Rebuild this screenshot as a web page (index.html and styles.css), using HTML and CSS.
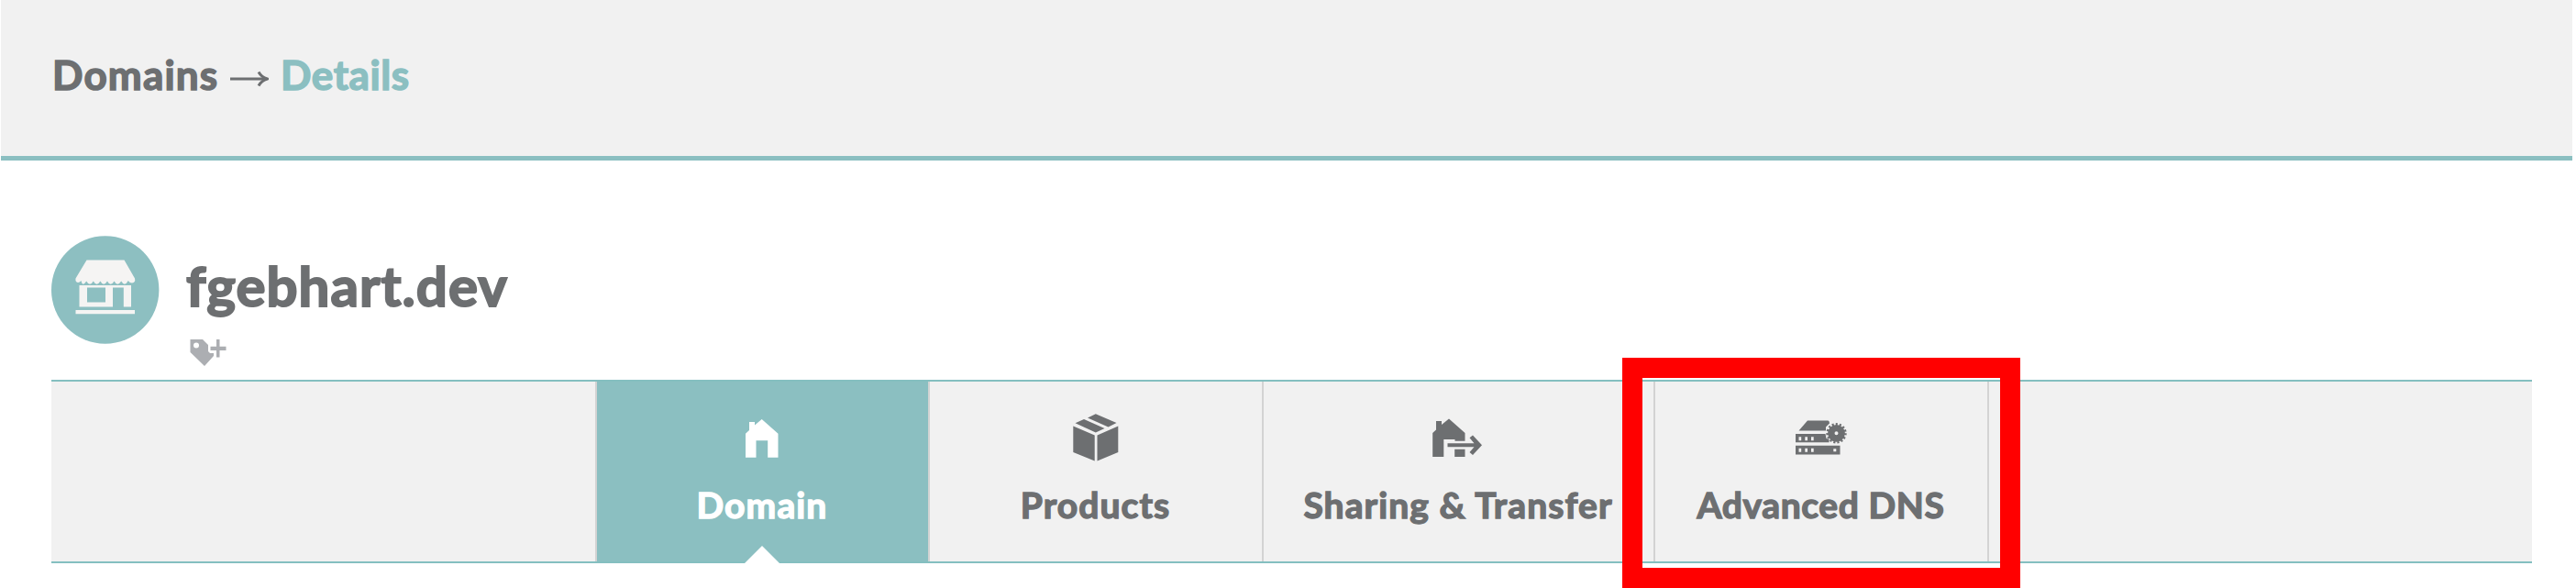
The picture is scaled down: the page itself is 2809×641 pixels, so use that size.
FILE: index.html
```html
<!DOCTYPE html>
<html lang="en">
<head>
<meta charset="utf-8">
<title>Domain details</title>
<link rel="stylesheet" href="styles.css">
</head>
<body>
<header class="crumbs">
  <span class="crumb crumb-root">Domains</span>
  <svg class="crumb-arrow" viewBox="0 0 42 18"><path d="M0 9H39" stroke-width="3"/><path d="M31 1.5Q34 7 40.500 9Q34 11 31 16.500" stroke-width="3"/></svg>
  <span class="crumb crumb-current">Details</span>
</header>
<main class="page">
  <section class="domain">
    <svg class="badge" viewBox="56 257 118 118">
      <circle cx="114.700" cy="316" r="58.700" fill="#8dbfc1"/>
      <g fill="#f5f4f3">
        <path d="M94.500 283.500H135.500L147 303.500Q148 308 144 308.500Q141.500 308.500 139.800 306Q136 313 132.200 306.500Q128 313 124.600 306.500Q120.500 313 117 306.500Q113 313 109.400 306.500Q105.500 313 101.800 306.500Q98 313 94.200 306.500Q90 313 88.500 306Q85.500 309.500 83 307Q82 305.500 82.500 303.500Z"/>
        <path fill-rule="evenodd" d="M86.500 311H143V334.500H134.800V313.500H123V334.500H86.500ZM95 313.500V329.500H115V313.500Z"/>
        <path d="M82.500 338H147V342.200H82.500Z"/>
      </g>
    </svg>
    <div class="domain-info">
      <h1 class="domain-name">fgebhart.dev</h1>
      <svg class="tag-add" viewBox="207 369 42 32" fill="#acaeb2">
        <path fill-rule="evenodd" d="M207.500 370H221L227 376V383L229 385H233V388L223 399L207.500 384ZM214 373.500A3 3 0 1 0 214 379.500A3 3 0 1 0 214 373.500Z"/>
        <path d="M229.500 377.700H236V370H239.500V377.700H246.500V382H239.500V389.500H236V382H229.500Z"/>
      </svg>
    </div>
  </section>
  <nav class="tabs">
    <a class="tab tab-active">
      <svg class="tab-icon" viewBox="801.500 446 60 60"><path d="M813.500 498.700V472.700L817.500 469V460H823.500V463.500L831.200 457L849 472.700V498.700H837.700V480.300H825V498.700Z"/></svg>
      <span class="tab-label">Domain</span>
    </a>
    <a class="tab">
      <svg class="tab-icon" viewBox="1165 446 60 60"><path d="M1170.300 464.500L1193.700 474.500V502.500L1170.300 493ZM1219.300 464.500V493L1196.500 502.500V474.500ZM1194.800 451.300L1217.500 461L1208.500 465.500L1186 455.500ZM1182 457L1204.500 467L1194.800 471.500L1172.500 461.300Z"/></svg>
      <span class="tab-label">Products</span>
    </a>
    <a class="tab tab-wide">
      <svg class="tab-icon" viewBox="1560.500 446 60 60"><path d="M1562.700 498V472L1566.500 468.500V459H1572.500V463L1580.500 456.500L1598 472V480.800H1587V479H1574.800V498ZM1586.700 489.700H1598V498H1586.700Z"/><path d="M1579 483.200H1608L1603 477.200L1606.500 474.500L1616.500 485.200L1606.500 496L1603 493L1608 487.200H1579Z"/></svg>
      <span class="tab-label">Sharing &amp; Transfer</span>
    </a>
    <a class="tab">
      <svg class="tab-icon" viewBox="1956 446 60 60">
        <path d="M1971 458.500H1993.500Q1995 459 1995 461.500L1991 465.500V469.500H1961.500Z"/>
        <path fill-rule="evenodd" d="M1958 473H1990.500L1991.500 478L1994.500 479V482.300H1958ZM1961.500 476.300V480.300H1964.200V476.300ZM1968.300 476.300V480.300H1971V476.300ZM1975 476.300V480.300H1977.700V476.300Z"/>
        <path fill-rule="evenodd" d="M1958 485.700H2006.500V495.500H1958ZM1961.500 488.800V492.800H1964.200V488.800ZM1968.300 488.800V492.800H1971V488.800ZM1975 488.800V492.800H1977.700V488.800ZM1999.300 489.300V492.300H2002.300V489.300Z"/>
        <circle cx="2002.500" cy="472.300" r="5.700" fill="none" stroke="#6d6f71" stroke-width="7.400"/>
        <circle cx="2002.500" cy="472.300" r="9.900" fill="none" stroke="#6d6f71" stroke-width="2.600" stroke-dasharray="2.100 2.043"/>
      </svg>
      <span class="tab-label label-dns">Advanced DNS</span>
    </a>
  </nav>
</main>
<div class="highlight"></div>
</body>
</html>
```
FILE: styles.css
```css
* { box-sizing: border-box; }
body {
  margin: 0;
  height: 641px;
  overflow: hidden;
  background: #fff;
  color: #6d6f71;
  font-family: Lato, "Open Sans", sans-serif;
  font-weight: 700;
}
.crumbs {
  display: flex;
  align-items: flex-start;
  width: 2804px;
  height: 175px;
  margin-left: 1px;
  padding: 55px 0 0 56px;
  background: #f1f1f1;
  border-bottom: 5px solid #8bbfc1;
}
.crumb {
  font-size: 44px;
  line-height: 52px;
  letter-spacing: 1.2px;
  white-space: nowrap;
  -webkit-text-stroke: 1.5px currentColor;
}
.crumb-root { width: 194px; }
.crumb-arrow {
  width: 42px;
  height: 18px;
  margin: 22px 13px 0 0;
  fill: none;
  stroke: #6d6f71;
}
.crumb-current { color: #8bbfc1; letter-spacing: 0.6px; }
.page { padding: 0 48px 0 56px; }
.domain {
  display: flex;
  height: 239px;
  padding-top: 82px;
}
.badge { width: 118px; height: 118px; }
.domain-info { padding-left: 29px; }
.domain-name {
  height: 112px;
  margin: 0;
  padding-top: 18px;
  font-size: 60px;
  line-height: 72px;
  letter-spacing: 1px;
  white-space: nowrap;
  -webkit-text-stroke: 2px currentColor;
}
.tag-add {
  display: block;
  width: 42px;
  height: 32px;
  margin-left: 4px;
}
.tabs {
  display: flex;
  justify-content: center;
  height: 200px;
  background: #f1f1f1;
  border-top: 2px solid #84bfc0;
  border-bottom: 2px solid #84bfc0;
}
.tab {
  display: flex;
  flex-direction: column;
  align-items: center;
  width: 364px;
  padding-top: 30px;
  border-right: 2px solid #d3d3d3;
  fill: #6d6f71;
}
.tab-wide { width: 427px; }
.tab-active {
  position: relative;
  width: 365px;
  border-left: 2px solid #d3d3d3;
  background: #8bbfc1;
  background-clip: padding-box;
  color: #fff;
  fill: #fff;
}
.tab-active::after {
  content: "";
  position: absolute;
  bottom: -2px;
  left: 161px;
  border: 19px solid transparent;
  border-top: 0;
  border-bottom-color: #fff;
}
.tab-icon { width: 60px; height: 60px; }
.tab-label {
  margin-top: 20px;
  font-size: 39px;
  line-height: 48px;
  letter-spacing: 1.1px;
  white-space: nowrap;
  -webkit-text-stroke: 1.4px currentColor;
}
.label-dns { letter-spacing: 0.6px; }
.highlight {
  position: absolute;
  left: 1769px;
  top: 390px;
  width: 434px;
  height: 251px;
  border: 22px solid #f00;
}
```
